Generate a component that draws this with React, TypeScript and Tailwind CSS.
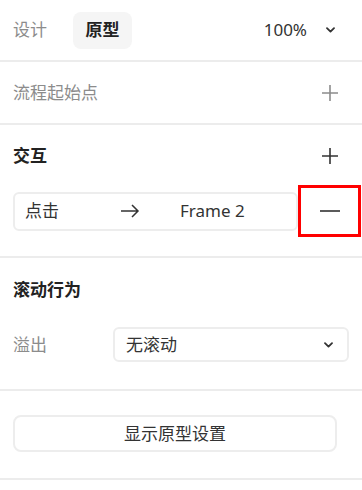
const font = { fontFamily: '"Noto Sans", "Noto Sans CJK SC", sans-serif' }

function Chevron() {
  return (
    <svg width="9" height="6" viewBox="0 0 9 6" fill="none">
      <path d="M1 1.2l3.5 3.4L8 1.2" stroke="#333" strokeWidth="1.8" strokeLinecap="round" strokeLinejoin="round" />
    </svg>
  )
}

function Plus({ color }: { color: string }) {
  return (
    <svg width="18" height="18" viewBox="0 0 18 18" fill="none">
      <path d="M9 1v16M1 9h16" stroke={color} strokeWidth="1.6" />
    </svg>
  )
}

function Divider() {
  return <div className="h-[2px] bg-[#ececec]" />
}

export default function App() {
  return (
    <div className="w-[362px] h-[490px] bg-white text-[17px] text-[#333]" style={font}>
      {/* tabs */}
      <div className="flex h-[60px] items-center pl-[13px] pr-[27px]">
        <span className="text-[#8c8c8c]">设计</span>
        <span className="ml-[26px] flex h-[37px] w-[59px] items-center justify-center rounded-lg bg-[#f5f5f5] font-bold text-[#222]">
          原型
        </span>
        <span className="ml-auto">100%</span>
        <span className="ml-[19px] flex items-center">
          <Chevron />
        </span>
      </div>
      <Divider />

      <div className="flex h-[61px] items-center pl-[13px] pr-[23px]">
        <span className="text-[#8c8c8c]">流程起始点</span>
        <span className="ml-auto">
          <Plus color="#8c8c8c" />
        </span>
      </div>
      <Divider />

      <div className="pt-[19px] pb-[19px]">
        <div className="flex h-6 items-center pl-[13px] pr-[23px]">
          <span className="font-bold text-[#222]">交互</span>
          <span className="ml-auto">
            <Plus color="#333" />
          </span>
        </div>
        <div className="mt-[17px] flex h-[52px] items-center pl-[13px] pr-px">
          <div className="flex h-[39px] flex-1 items-center rounded-md border-2 border-[#ededed] pl-[10px]">
            <span className="w-[95px]">点击</span>
            <svg width="20" height="14" viewBox="0 0 20 14" fill="none">
              <path d="M1 7h17M12 1l6 6-6 6" stroke="#333" strokeWidth="1.5" />
            </svg>
            <span className="ml-[40px]">Frame 2</span>
          </div>
          <button className="flex h-[52px] w-[63px] items-center justify-center border-[3px] border-[#ff0000]">
            <svg width="20" height="2" viewBox="0 0 20 2">
              <path d="M0 1h20" stroke="#333" strokeWidth="1.6" />
            </svg>
          </button>
        </div>
      </div>
      <Divider />

      <div className="pt-5 pb-[27px] pl-[13px] pr-[13px]">
        <div className="flex h-6 items-center font-bold text-[#222]">滚动行为</div>
        <div className="mt-[25px] flex items-center">
          <span className="w-[100px] text-[#8c8c8c]">溢出</span>
          <div className="flex h-[35px] flex-1 items-center rounded-md border-2 border-[#ededed] pl-[11px] pr-[14px]">
            <span>无滚动</span>
            <span className="ml-auto flex items-center">
              <Chevron />
            </span>
          </div>
        </div>
      </div>
      <Divider />

      <div className="pt-6 pb-[26px] pl-[13px] pr-[25px]">
        <button className="flex h-[37px] w-full items-center justify-center rounded-lg border-2 border-[#ededed] text-[#333]">
          显示原型设置
        </button>
      </div>
      <Divider />
    </div>
  )
}
